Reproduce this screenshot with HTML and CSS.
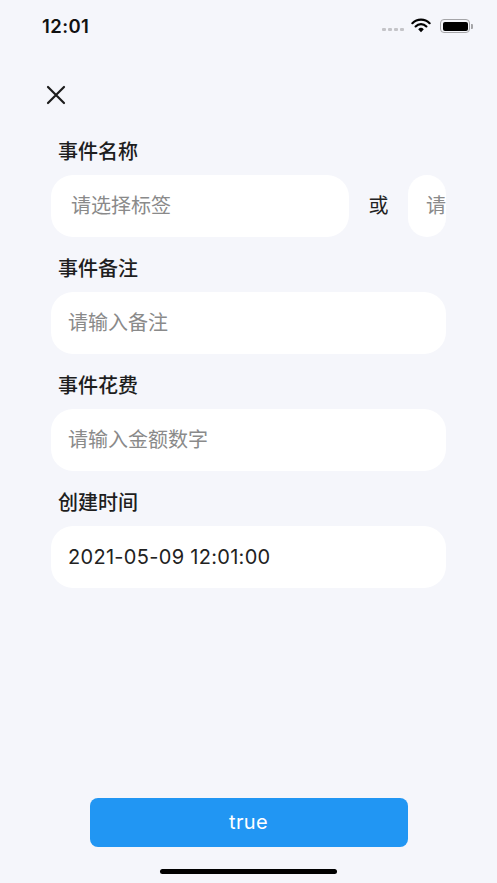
FILE: index.html
```html
<!DOCTYPE html>
<html lang="zh">
<head>
<meta charset="utf-8">
<link rel="stylesheet" href="styles.css">
</head>
<body>
<div class="screen">
  <div class="statusbar">
    <span class="time">12:01</span>
    <div class="status-icons">
      <span class="dots"><i></i><i></i><i></i><i></i></span>
      <svg class="wifi" width="20" height="15" viewBox="0 0 20 15">
        <path d="M10 14.2 L7.2 11.2 A4 4 0 0 1 12.8 11.2 Z" fill="#000"/>
        <path d="M4.6 8.4 A7.6 7.6 0 0 1 15.4 8.4" fill="none" stroke="#000" stroke-width="2.2" stroke-linecap="round"/>
        <path d="M1.4 5.2 A12.2 12.2 0 0 1 18.6 5.2" fill="none" stroke="#000" stroke-width="2.2" stroke-linecap="round"/>
      </svg>
      <span class="battery"><span class="battery-fill"></span></span>
      <span class="battery-nub"></span>
    </div>
  </div>

  <div class="nav">
    <svg class="close" width="20" height="20" viewBox="0 0 20 20">
      <path d="M2 2 L18 18 M18 2 L2 18" stroke="#1c1c1c" stroke-width="2.2" stroke-linecap="round"/>
    </svg>
  </div>

  <div class="form">
    <div class="field">
      <div class="label">事件名称</div>
      <div class="row-split">
        <div class="input input-tag"><span class="placeholder">请选择标签</span></div>
        <div class="or">或</div>
        <div class="input input-side"><span class="placeholder">请</span></div>
      </div>
    </div>
    <div class="field">
      <div class="label">事件备注</div>
      <div class="input"><span class="placeholder">请输入备注</span></div>
    </div>
    <div class="field">
      <div class="label">事件花费</div>
      <div class="input"><span class="placeholder">请输入金额数字</span></div>
    </div>
    <div class="field">
      <div class="label">创建时间</div>
      <div class="input"><span class="value">2021-05-09 12:01:00</span></div>
    </div>
  </div>

  <div class="spacer"></div>

  <div class="footer">
    <button class="submit">true</button>
    <div class="home-indicator"></div>
  </div>
</div>
</body>
</html>
```

FILE: styles.css
```css
* { box-sizing: border-box; }
html, body { margin: 0; padding: 0; }
body {
  background: #f5f6fb;
  font-family: "Noto Sans CJK SC", "Noto Sans", sans-serif;
  color: #1e1e1e;
}
.screen {
  width: 497px;
  height: 883px;
  display: flex;
  flex-direction: column;
  overflow: hidden;
}
.statusbar {
  height: 52px;
  display: flex;
  align-items: center;
  justify-content: space-between;
  padding: 0 24px 0 42px;
}
.time {
  font-family: Inter, "Liberation Sans", sans-serif;
  font-weight: 600;
  font-size: 18.5px;
  letter-spacing: 0.4px;
  color: #111;
}
.status-icons {
  display: flex;
  align-items: center;
}
.dots {
  display: flex;
  gap: 2px;
  margin-right: 7px;
  margin-top: 7px;
}
.dots i {
  display: block;
  width: 4px;
  height: 3px;
  border-radius: 1px;
  background: #c4c4c8;
}
.wifi { margin-right: 9px; margin-top: -1px; }
.battery {
  width: 30px;
  height: 14px;
  border: 1.3px solid #a5a5a8;
  border-radius: 4px;
  padding: 1.5px;
  display: flex;
}
.battery-fill {
  flex: 1;
  background: #000;
  border-radius: 2px;
}
.battery-nub {
  width: 2px;
  height: 5px;
  background: #a5a5a8;
  border-radius: 0 1px 1px 0;
  margin-left: 1px;
}
.nav {
  height: 89px;
  padding: 33px 0 0 46px;
}
.close { display: block; }
.form {
  padding: 0 51px;
  display: flex;
  flex-direction: column;
  gap: 21px;
}
.field {
  display: flex;
  flex-direction: column;
  gap: 10px;
}
.label {
  font-size: 20px;
  line-height: 24px;
  font-weight: 500;
  padding: 0 0 2px 7px;
  margin-top: -2px;
  color: #1e1e1e;
}
.input {
  height: 62px;
  background: #fff;
  border-radius: 22px;
  display: flex;
  align-items: center;
  padding: 0 0 3px 17px;
  font-size: 20px;
}
.placeholder { color: #8a8a8a; }
.value {
  font-family: Inter, "Liberation Sans", sans-serif;
  font-size: 20px;
  color: #222;
  letter-spacing: 0.3px;
  margin-top: 3px;
}
.row-split {
  display: flex;
  align-items: center;
  overflow: hidden;
}
.input-tag {
  width: 298px;
  flex: none;
  padding-left: 20px;
}
.or {
  width: 59px;
  flex: none;
  text-align: center;
  font-size: 20px;
  color: #222;
  padding-bottom: 3px;
}
.input-side {
  flex: 1;
  padding-left: 18px;
  white-space: nowrap;
}
.spacer { flex: 1; }
.footer {
  display: flex;
  flex-direction: column;
  align-items: center;
  padding-bottom: 9px;
}
.submit {
  width: 318px;
  height: 49px;
  background: #2196f3;
  border: none;
  border-radius: 8px;
  color: #fff;
  font-family: Inter, "Liberation Sans", sans-serif;
  font-size: 20px;
  letter-spacing: 0.3px;
  padding-bottom: 2px;
}
.home-indicator {
  width: 177px;
  height: 5px;
  border-radius: 3px;
  background: #000;
  margin-top: 22px;
}
```
